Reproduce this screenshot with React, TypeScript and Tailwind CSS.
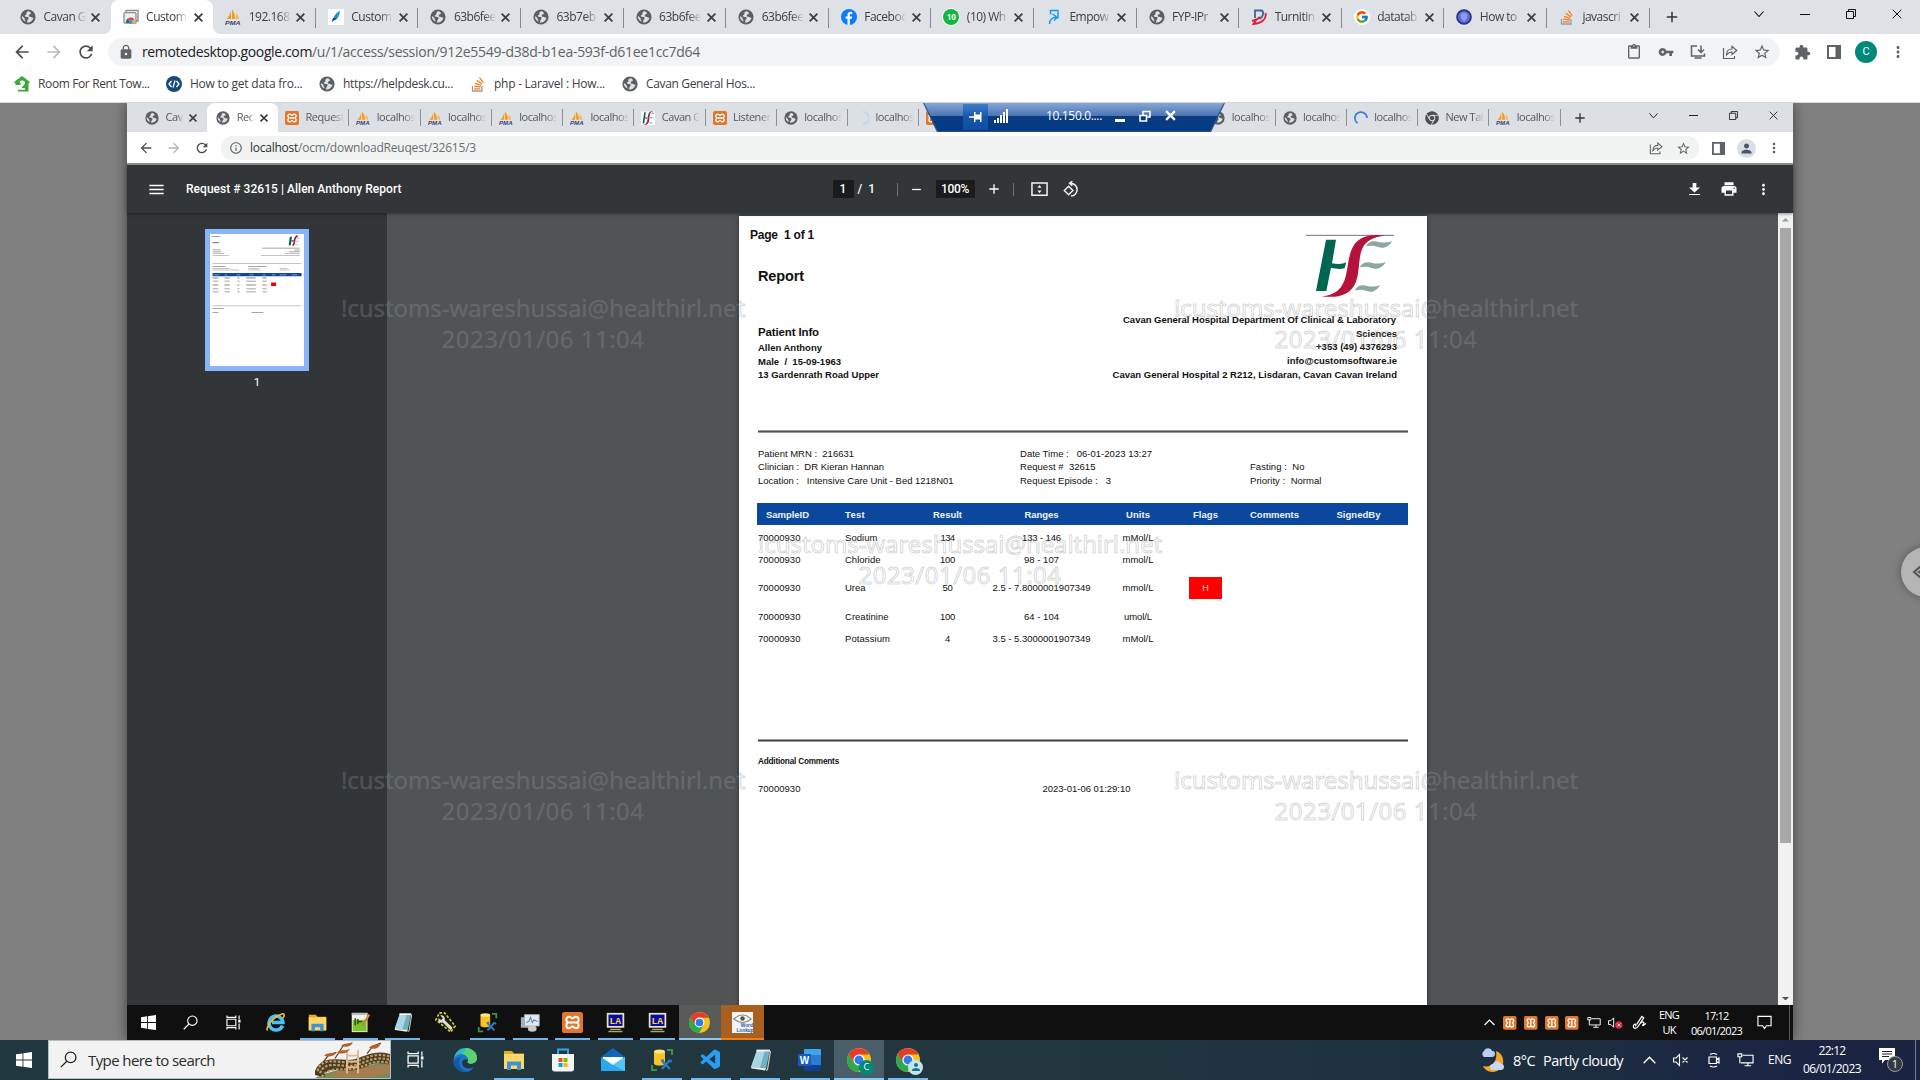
import React, { useLayoutEffect, useRef, useState } from "react";
import {
  MdArrowBack, MdArrowForward, MdRefresh, MdLock, MdStarBorder, MdExtension, MdMoreVert,
  MdContentPaste, MdVpnKey, MdPerson, MdMenu, MdRemove, MdAdd, MdPrint, MdInfoOutline,
} from "react-icons/md";
import { FcGoogle } from "react-icons/fc";
import { FaChrome } from "react-icons/fa";
import { VscVscode } from "react-icons/vsc";

const UI = "font-['Open_Sans','Noto_Sans',sans-serif]";

/** One line of text whose letter spacing is tuned to fill `w` pixels. */
function Fit({ w, children, className = "" }: { w: number; children: string; className?: string }) {
  const ref = useRef<HTMLSpanElement>(null);
  const [ls, setLs] = useState(0);
  useLayoutEffect(() => {
    const el = ref.current;
    if (!el) return;
    setLs((w - el.getBoundingClientRect().width) / children.length);
  }, [w, children]);
  return (
    <span ref={ref} className={"inline-block shrink-0 whitespace-pre " + className} style={{ letterSpacing: ls }}>
      {children}
    </span>
  );
}

/* ---------- favicons ---------- */
const Globe = ({ className = "size-4" }) => (
  <svg viewBox="0 0 16 16" className={className}>
    <circle cx="8" cy="8" r="7.6" fill="#5b5f63" />
    <path d="M9 2.3c-2 .2-3 1.4-2.6 2.6.3 1-1.6.8-1.6 2 0 1 1.8.7 3 1.1 1.3.4.8 1.9.1 2.6-.7.7-.5 2-1.2 2.9 3.8.3 6.3-2.2 6.7-4.8-1.2.3-2-.9-3.2-.9-1.3 0-1.8-.9-1.3-1.8.4-.7 1.7-.4 2-1.4.1-.9-.7-1.6-1.9-2.3Z" fill="#dee1e6" />
    <path d="M1.9 7c1.3 1 2.7 1.500 2.8 2.900.1 1 .9 1.300 1 2.600C3.300 11.700 1.700 9.500 1.900 7Z" fill="#dee1e6" />
  </svg>
);
const Pma = ({ className = "size-4" }) => (
  <svg viewBox="0 0 16 16" className={className}>
    <path d="M6 1v9H1.500C4 7.500 5.500 5 6 1ZM7 .5c2.500 3 3.300 6 3.300 9.500H7Z" fill="#f79b1e" />
    <path d="M11 4c1.800 1.600 2.700 3.600 3 6h-3Z" fill="#fbb657" />
    <text x="0" y="15.800" fontSize="6.200" fontWeight="bold" fontStyle="italic" fill="#3c3f73" fontFamily="Liberation Sans" textLength="15.500" lengthAdjust="spacingAndGlyphs">PMA</text>
  </svg>
);
const Xampp = ({ className = "size-4" }) => (
  <svg viewBox="0 0 16 16" className={className}>
    <rect width="16" height="16" rx="2" fill="#e2762d" />
    <path d="M5.600 3.600C3.600 3.600 3.300 5 3.300 6c0 1 .800 1.700 1.400 2-.900.300-1.400 1-1.400 2.100 0 1.300.700 2.300 2 2.300 1.700 0 1.600-1.400 2.700-1.400s1 1.400 2.700 1.400c1.300 0 2-1 2-2.300 0-1.100-.5-1.800-1.400-2.100.600-.3 1.400-1 1.400-2 0-1-.3-2.400-2.300-2.400-1.300 0-1.300 1.300-2.400 1.300S6.900 3.600 5.600 3.600ZM5.500 8h5" fill="none" stroke="#fff" strokeWidth="1.500" />
  </svg>
);
const Remote = () => (
  <svg viewBox="0 0 16 16" className="size-4">
    <path d="M3 3V1.500h12V12h-2" fill="none" stroke="#8b8f93" strokeWidth="1.400" />
    <rect x="1" y="3.700" width="12" height="10.500" rx="1" fill="#eee" stroke="#8b8f93" strokeWidth="1.300" />
    <path d="M3 14a4.200 4.200 0 0 1 2-4.500L7.500 14Z" fill="#188038" />
    <path d="M4.500 9.800a4.300 4.300 0 0 1 7.200 1.700H7Z" fill="#ea4335" />
    <path d="M9 11.500h3V14H8Z" fill="#fbbc04" />
    <circle cx="7.700" cy="12.800" r="1.900" fill="#4285f4" />
  </svg>
);
const Feather = () => (
  <svg viewBox="0 0 16 16" className="size-4">
    <rect width="16" height="16" fill="#fff" />
    <path d="M12 2c-3 1-5.500 4-6.500 7l-2 3.500L7 11c3-1 4.500-5 5-9Z" fill="#1593d6" />
    <path d="M5 9h4l-5 4Z" fill="#0d4b80" />
  </svg>
);
const Facebook = () => (
  <svg viewBox="0 0 16 16" className="size-4">
    <circle cx="8" cy="8" r="8" fill="#0a7cff" />
    <path d="M8.800 16V9.800h2l.4-2.300H8.800V6.200c0-.8.400-1.300 1.300-1.300h1.200V2.900C9 2.400 6.500 2.700 6.500 5.700v1.800H4.600v2.300h1.900V16Z" fill="#fff" />
  </svg>
);
const Whats = () => (
  <span className="flex size-4 items-center justify-center rounded-full bg-[#10b83f] text-[8px] font-bold text-white ring-1 ring-white">10</span>
);
const Empow = () => (
  <svg viewBox="0 0 16 16" className="size-4" fill="none" stroke="#1e9bf0" strokeWidth="1.500">
    <path d="M4.500 5.500V1.500h7.500V9.500M3.500 15c0-4 1.500-6.500 7.500-7M6.500 5 11.300 8.300 8 11.500" />
  </svg>
);
const Turnitin = () => (
  <svg viewBox="0 0 16 16" className="size-4" fill="none" strokeWidth="1.900">
    <path d="M4 9V1.500h7c2 2 1.500 6-2.500 8.500" stroke="#3d6a9e" />
    <path d="M14.500 4c1.500 6-4 10.500-12 11l3-4.500M1 12c3-1 5-1 8-4" stroke="#e0233c" />
  </svg>
);
const Orb = () => (
  <svg viewBox="0 0 16 16" className="size-4">
    <circle cx="8" cy="8" r="7.800" fill="#2b3480" /><circle cx="8" cy="8" r="6" fill="#5b6bd8" />
    <path d="M4.500 5 8 3.500 11.500 5c0 4-1 6-3.500 7.500C5.500 11 4.500 9 4.500 5Z" fill="#8d9af0" />
  </svg>
);
const So = () => (
  <svg viewBox="0 0 16 16" className="size-4" fill="none" strokeWidth="1.300">
    <path d="M2.500 10v5h9.500v-5" stroke="#9a9da0" />
    <path d="M4 12.800h6.500M4.200 10.200l6.400.8M5 7.300l6.200 2M6.800 4.300l5.300 3.600M9.500 1.700l3.800 5" stroke="#f48024" />
  </svg>
);
const Spinner = ({ faint = false }) => (
  <svg viewBox="0 0 16 16" className="size-3.5" fill="none" stroke={faint ? "#c3d3f0" : "#3f7ee0"} strokeWidth="2">
    {faint ? <path d="M9 1a7 7 0 0 1 0 14" /> : <path d="M4 14A7 7 0 1 1 15 8" />}
  </svg>
);
const HseMark = ({ className = "" }) => (
  <svg viewBox="78 72 264 192" className={className} preserveAspectRatio="none">
    <path d="M78 76h264" stroke="#555" strokeWidth="2.500" />
    <path d="M138 89h30l-12 71c14 2 30 4 43-3l-5 17c-13 5-28 2-41-1l-14 70h-31Z" fill="#00664f" />
    <path d="M316 77C280 72 240 76 220 108c-15 27-15 57-22 87-8 40-33 62-73 64 48 6 88-4 103-44 12-35 6-65 18-97 10-26 35-38 70-41Z" fill="#b5123c" />
    <g fill="#8aa99b">
      <path d="M258 109c10-17 26-17 38-13 14 3 26 2 40-3-9 18-25 24-42 18-13-5-24-4-36-2Z" />
      <path d="M239 172c10-17 26-17 38-13 14 3 26 2 40-3-9 18-25 24-42 18-13-5-24-4-36-2Z" />
      <path d="M224 241c10-17 26-17 38-13 14 3 26 2 38-3-9 18-25 24-40 18-13-5-24-4-36-2Z" />
    </g>
  </svg>
);
const HseFav = () => <span className="flex size-3.5 items-center justify-center bg-white"><HseMark className="h-3.5 w-3.5" /></span>;
const ChromeLogo = ({ className = "size-5" }) => (
  <svg viewBox="0 0 24 24" className={className}>
    <circle cx="12" cy="12" r="12" fill="#fbc116" />
    <path d="M1.600 6A12 12 0 0 0 11.500 24L17 14.500 12 12 7 15Z" fill="#2da94f" />
    <path d="M1.600 6A12 12 0 0 1 22.400 6.500H12L7 15Z" fill="#e33b2e" />
    <circle cx="12" cy="12" r="5.600" fill="#fff" /><circle cx="12" cy="12" r="4.400" fill="#2f7de9" />
  </svg>
);
const Share = ({ className = "size-4" }) => (
  <svg viewBox="0 0 16 16" className={className} fill="none" stroke="#5f6368" strokeWidth="1.200">
    <path d="M1.500 4v10.500h11V12M4.500 11c0-4 2.500-6 5.500-6V2.300L14.800 6.500 10 10.500V8C7.500 8 6 9 4.500 11Z" />
  </svg>
);
const SidePanel = ({ className = "size-3.5" }) => (
  <svg viewBox="0 0 14 14" className={className}><path d="M1 1h12v12H1Z" fill="none" stroke="#5f6368" strokeWidth="2" /><path d="M8.500 1H13v12H8.500Z" fill="#5f6368" /></svg>
);
const Restore = ({ className = "size-2.5" }) => (
  <svg viewBox="0 0 10 10" className={className} fill="none" stroke="currentColor"><path d="M.5 2.500h7v7h-7ZM2.500 2.500v-2h7v7h-2" /></svg>
);
const Chev = ({ up = false, className = "w-2.5" }) => (
  <svg viewBox="0 0 10 6" className={className} fill="none" stroke="currentColor" strokeWidth="1.100"><path d={up ? "M.5 5.500 5 1l4.500 4.500" : "M.5.5 5 5.500 9.500.5"} /></svg>
);
const Cross = ({ className = "size-2.5", sw = 1 }) => (
  <svg viewBox="0 0 10 10" className={"shrink-0 " + className} fill="none" stroke="currentColor" strokeWidth={sw}><path d="m.7.7 8.600 8.600m0-8.600L.7 9.300" /></svg>
);

/* ---------- outer browser ---------- */
const outerTabs: [React.ReactNode, string][] = [
  [<Globe />, "Cavan G"], [<Remote />, "Custom"], [<Pma />, "192.168"], [<Feather />, "Custom"],
  [<Globe />, "63b6fee"], [<Globe />, "63b7eb"], [<Globe />, "63b6fee"], [<Globe />, "63b6fee"],
  [<Facebook />, "Faceboo"], [<Whats />, "(10) Wh"], [<Empow />, "Empow"], [<Globe />, "FYP-IPr"],
  [<Turnitin />, "Turnitin"], [<span className="flex size-4 items-center justify-center rounded-full bg-white"><FcGoogle className="size-3.5" /></span>, "datatab"],
  [<Orb />, "How to"], [<So />, "javascri"],
];

function OuterTabs() {
  return (
    <div className="flex h-[34px] bg-[#dee1e6] pl-[8px]">
      {outerTabs.map(([icon, t], i) => (
        <div
          key={i}
          className={
            "relative flex h-full w-[102.6px] shrink-0 items-center pl-[12px] " +
            (i === 1 ? "rounded-t-lg bg-white before:absolute before:bottom-0 before:-left-2 before:size-2 before:bg-[radial-gradient(circle_at_0_0,transparent_8px,white_8px)] after:absolute after:bottom-0 after:-right-2 after:size-2 after:bg-[radial-gradient(circle_at_100%_0,transparent_8px,white_8px)]" : "")
          }
        >
          {icon}
          <span className="ml-[7.500px] w-[42px] overflow-hidden text-[12px] tracking-[-0.500px] whitespace-nowrap text-[#3c4043] [mask-image:linear-gradient(to_right,black_70%,transparent)]">{t}</span>
          <Cross sw={2} className="ml-[5.500px] size-[9px] text-[#3c4043]" />
          {i > 1 && <span className="absolute top-2 right-0 h-5 w-px bg-[#85888c]" />}
        </div>
      ))}
      <div className="flex w-[44px] items-center justify-center"><MdAdd className="size-[18px] text-[#333]" /></div>
      <div className="flex h-[28px] flex-1 items-center justify-end text-[#111]">
        <span className="flex w-[46px] justify-center"><Chev className="w-[10px]" /></span>
        <span className="flex w-[46px] justify-center"><i className="h-px w-[10px] bg-[#111]" /></span>
        <span className="flex w-[46px] justify-center"><Restore /></span>
        <span className="flex w-[46px] justify-center"><Cross /></span>
      </div>
    </div>
  );
}

function OuterToolbar() {
  return (
    <div className="flex h-[36px] items-center bg-white text-[#5f6368]">
      <div className="flex w-[108px] items-center pl-[12px]">
        <MdArrowBack className="size-5 text-[#4a4d51]" />
        <MdArrowForward className="ml-3 size-5 text-[#b9bbbe]" />
        <MdRefresh className="ml-3 size-5 text-[#4a4d51]" />
      </div>
      <div className="flex h-[28px] w-[1672px] items-center rounded-full bg-[#f1f3f4] pl-[10px]">
        <MdLock className="size-4" />
        <div className="ml-[8px] flex pb-px text-[14px]">
          <Fit w={170} className="text-[#202124]">remotedesktop.google.com</Fit>
          <Fit w={388}>/u/1/access/session/912e5549-d38d-b1ea-593f-d61ee1cc7d64</Fit>
        </div>
        <div className="ml-auto flex items-center pr-[2px]">
          <span className="flex w-8 justify-center"><MdContentPaste className="size-4" /></span>
          <span className="flex w-8 justify-center"><MdVpnKey className="size-4" /></span>
          <span className="flex w-8 justify-center">
            <svg viewBox="0 0 16 16" className="size-4" fill="none" stroke="#5f6368" strokeWidth="1.500"><path d="M7 2H1.500v10h13V9.500M4.500 14h7M11 1.500V8M8 5.500l3 3 3-3" /></svg>
          </span>
          <span className="flex w-8 justify-center"><Share /></span>
          <span className="flex w-8 justify-center"><MdStarBorder className="size-[18px]" /></span>
        </div>
      </div>
      <div className="ml-[6px] flex items-center">
        <span className="flex w-8 justify-center"><MdExtension className="size-[17px]" /></span>
        <span className="flex w-8 justify-center"><SidePanel /></span>
        <span className="flex w-8 justify-center"><i className="flex size-[22px] items-center justify-center rounded-full bg-[#00897b] font-['Roboto'] text-[11px] text-white not-italic">C</i></span>
        <span className="flex w-8 justify-center"><MdMoreVert className="size-[18px]" /></span>
      </div>
    </div>
  );
}

const Room = () => (
  <svg viewBox="0 0 16 16" className="size-4"><path d="M8 0 16 6l-1.500 1.500V15.500H4V14l5-5.500c.5-1-1-2-2-1L6 9H1.500V7.500L0 6Z" fill="#3aaa35" /><path d="M5.500 6c2-2.500 6-1.500 5.500 1.200-.3 1.800-3 3.300-3.500 4.800H11v1.800H4.500C4.700 11 8 9 8.500 7.300c.2-1-1.500-1-1.800.3Z" fill="#fff" /></svg>
);
const Code = () => (
  <svg viewBox="0 0 16 16" className="size-4"><circle cx="8" cy="8" r="8" fill="#174a7c" /><path d="M5.500 5 3 8l2.500 3M10.500 5 13 8l-2.500 3M9 4.500l-2 7" fill="none" stroke="#fff" strokeWidth="1.300" /></svg>
);

function Bookmarks() {
  const items: [React.ReactNode, string, number, string][] = [
    [<Room />, "Room For Rent Tow...", 111.5, "w-[152px]"],
    [<Code />, "How to get data fro...", 112.5, "w-[153px]"],
    [<Globe />, "https://helpdesk.cu...", 110, "w-[151px]"],
    [<So />, "php - Laravel : How...", 111, "w-[152px]"],
    [<Globe />, "Cavan General Hos...", 109, "w-[150px]"],
  ];
  return (
    <div className="flex h-[33px] items-center border-b border-[#d4d6d8] bg-white pb-[4px] pl-[14px] text-[12px] text-[#3c4043]">
      {items.map(([icon, t, w, c]) => (
        <div key={t} className={"flex shrink-0 items-center gap-2 " + c}>{icon}<Fit w={w}>{t}</Fit></div>
      ))}
    </div>
  );
}

/* ---------- remote browser ---------- */
const s = "size-3.5";
const innerTabs: [React.ReactNode, string][] = [
  [<Globe className={s} />, "Cav"], [<Globe className={s} />, "Req"], [<Xampp className={s} />, "Request"],
  [<Pma className={s} />, "localhos"], [<Pma className={s} />, "localhos"], [<Pma className={s} />, "localhos"], [<Pma className={s} />, "localhos"],
  [<HseFav />, "Cavan G"], [<Xampp className={s} />, "Listener"], [<Globe className={s} />, "localhos"], [<Spinner faint />, "localhos"],
  [<Xampp className={s} />, ""], [null, ""], [null, ""], [null, ""],
  [<Globe className={s} />, "localhos"], [<Globe className={s} />, "localhos"], [<Spinner />, "localhos"],
  [<FaChrome className="size-3.5 text-[#4b4e52]" />, "New Tab"], [<Pma className={s} />, "localhos"],
];

function RdpBar() {
  return (
    <div className="absolute top-0 left-[796px] h-[29px] w-[302px] bg-[#2b4f86] [clip-path:polygon(0_0,100%_0,95.4%_100%,4.6%_100%)]">
      <div className="flex h-[28px] items-center bg-[linear-gradient(#86a7d6_0%,#4b76b6_45%,#0b3c82_48%,#003a86_100%)] pb-[3px] text-white [clip-path:polygon(0.4%_0,99.6%_0,95%_100%,5%_100%)]">
        <span className="-mb-[3px] ml-[40px] flex h-[26px] w-[25px] items-center justify-center bg-[linear-gradient(#3f7cc8,#1657ab_50%,#0f4ea0)]">
          <svg viewBox="0 0 14 12" className="w-[14px]" fill="#fff"><path d="M0 5.200h5v1.600H0ZM5 1h1.500v2.500H11V1h1.500v10H11V8.500H6.500V11H5Z" /></svg>
        </span>
        <svg viewBox="0 0 14 14" className="ml-[6px] w-[14px]" fill="#fff"><path d="M0 11h2v3H0ZM3 9h2v5H3ZM6 6h2v8H6ZM9 3h2v11H9ZM12 0h2v14h-2Z" /></svg>
        <Fit w={56} className="ml-[38px] pt-px text-[12px]">10.150.0....</Fit>
        <i className="mt-[10px] ml-[13px] h-[3px] w-[10px] bg-white" />
        <svg viewBox="0 0 12 12" className="ml-[14px] w-[12px]" fill="none" stroke="#fff" strokeWidth="1.600"><path d="M1 5.500h6.500V11H1ZM4 5V1.500h7V7H8" /></svg>
        <svg viewBox="0 0 10 10" className="ml-[14px] w-[11px]" stroke="#fff" strokeWidth="2"><path d="m1 1 8 8M9 1 1 9" /></svg>
      </div>
    </div>
  );
}

function InnerBrowser() {
  return (
    <>
      <div className="relative flex h-[29px] bg-[#dcdfe4] pl-[8.500px]">
        {innerTabs.map(([icon, t], i) => (
          <div
            key={i}
            className={"relative flex h-full w-[71.25px] shrink-0 items-center " + (i < 2 ? "pl-[9.500px] " : "pl-[7px] ") + (i === 1 ? "rounded-t-lg bg-white" : "")}
          >
            <span className="flex w-[15px]">{icon}</span>
            <span className={"ml-[5.500px] overflow-hidden text-[11px] tracking-[-0.450px] whitespace-nowrap text-[#55595e] [mask-image:linear-gradient(to_right,black_70%,transparent)] " + (i < 2 ? "w-[17px]" : "w-[38px]")}>{t}</span>
            {i < 2 && <Cross sw={2} className="ml-[6.500px] size-[8px] text-[#3c4043]" />}
            {i > 1 && <span className="absolute top-[6px] right-0 h-[17px] w-px bg-[#8e9195]" />}
          </div>
        ))}
        <div className="flex w-[38px] items-center justify-center"><MdAdd className="size-[16px] text-[#333]" /></div>
        <div className="flex h-[25px] flex-1 items-center justify-end text-[#222]">
          <span className="flex w-[40px] justify-center"><Chev className="w-[9px]" /></span>
          <span className="flex w-[40px] justify-center"><i className="h-px w-[9px] bg-[#222]" /></span>
          <span className="flex w-[40px] justify-center"><Restore className="size-[9px]" /></span>
          <span className="flex w-[40px] justify-center"><Cross className="size-[9px]" /></span>
        </div>
        <RdpBar />
      </div>
      <div className="flex h-[33px] items-center border-b-2 border-[#8c9092] bg-white pt-px text-[#5f6368]">
        <div className="flex w-[94px] items-center pl-[11px]">
          <MdArrowBack className="size-4 text-[#4a4d51]" />
          <MdArrowForward className="ml-3 size-4 text-[#b0b2b5]" />
          <MdRefresh className="ml-3 size-4 text-[#4a4d51]" />
        </div>
        <div className="flex h-[24px] w-[1478px] items-center rounded-full bg-[#f0f3f2] pl-[8px]">
          <MdInfoOutline className="size-[14px]" />
          <div className="ml-[7px] flex text-[12px]">
            <Fit w={48} className="text-[#2c2f33]">localhost</Fit>
            <Fit w={178} className="text-[#6a6e72]">/ocm/downloadReuqest/32615/3</Fit>
          </div>
          <Share className="mr-[13px] ml-auto size-[14px]" />
          <MdStarBorder className="mr-[8px] size-[15px]" />
        </div>
        <SidePanel className="ml-[13px] size-[13px]" />
        <span className="ml-[12px] flex size-[19px] items-center justify-center rounded-full bg-[#dadfe6]"><MdPerson className="size-[15px] text-[#4a5568]" /></span>
        <MdMoreVert className="ml-[10px] size-[16px]" />
      </div>
    </>
  );
}

function PdfToolbar() {
  return (
    <div className="relative z-10 flex h-[48px] items-center bg-[#323639] font-['Roboto',sans-serif] text-white shadow-[0_1px_3px_rgba(0,0,0,0.4)]">
      <MdMenu className="ml-[20px] size-[19px]" />
      <Fit w={215.5} className="ml-[20px] text-[12px] font-medium">Request # 32615 | Allen Anthony Report</Fit>
      <div className="ml-[431px] flex items-center text-[12px] font-medium">
        <span className="flex h-[18px] w-[21px] items-center justify-center bg-[#191b1c]">1</span>
        <span className="ml-[4px] w-[39px] whitespace-pre">/  1</span>
        <i className="h-[13px] w-px bg-[#6a6e70]" />
        <MdRemove className="ml-[11px] size-[15px]" />
        <span className="ml-[12px] flex h-[18px] w-[39px] items-center justify-center bg-[#191b1c]"><Fit w={28}>100%</Fit></span>
        <MdAdd className="ml-[11px] size-[16px]" />
        <i className="ml-[11px] h-[13px] w-px bg-[#6a6e70]" />
        <svg viewBox="0 0 18 15" className="ml-[17px] w-[17px]" fill="none" stroke="#f1f1f1" strokeWidth="1.600"><path d="M1 1h16v13H1Z" /><path d="M9 3.200 6.800 6h4.400ZM9 11.800 6.800 9h4.400Z" fill="#f1f1f1" stroke="none" /></svg>
        <svg viewBox="0 0 18 18" className="ml-[14px] w-[17px]" fill="none" stroke="#f1f1f1" strokeWidth="1.600"><path d="m7 5.500 4.500 4.500L7 14.500 2.500 10ZM9 2.500c4 0 7 2.800 7 6.700 0 3.800-3 6.600-6.500 6.800M11 0 8 2.500 11 5" /></svg>
      </div>
      <svg viewBox="0 0 12 14" className="ml-auto w-[11px]" fill="#fff"><path d="M4 0h4v5h4L6 10.500 0 5h4ZM0 12h12v2H0Z" /></svg>
      <MdPrint className="ml-[20px] size-[18px]" />
      <MdMoreVert className="mr-[21px] ml-[17px] size-[17px]" />
    </div>
  );
}

function Sidebar() {
  return (
    <div className="flex w-[260px] shrink-0 flex-col bg-[#323639] pl-[78px] pt-[16px]">
      <div className="h-[142px] w-[104px] border-[5px] border-[#8ab4f8] bg-white">
        <svg viewBox="0 0 688 966" className="size-full" preserveAspectRatio="none">
          <g fill="#888">
            <path d="M11 14h64v6H11ZM19 58h46v9H19Z" />
            <path d="M19 114h60v5H19ZM19 128h63v5H19ZM19 142h82v5H19ZM19 155h120v5H19Z" />
            <path d="M384 101h273v5H384ZM617 115h40v5H617ZM577 128h80v5H577ZM548 142h109v5H548ZM374 155h284v5H374Z" />
            <path d="M19 234h95v5H19ZM19 248h125v5H19ZM19 261h195v5H19ZM281 234h132v5H281ZM281 248h76v5H281ZM281 261h91v5H281ZM511 248h54v5H511ZM511 261h71v5H511Z" />
            {[319, 342, 370, 399, 420].map((y) => (
              <path key={y} d={`M19 ${y}h43v6h-43ZM106 ${y}h38v6h-38ZM200 ${y}h16v6h-16ZM265 ${y}h70v6h-70ZM383 ${y}h31v6h-31Z`} />
            ))}
            <path d="M19 543h81v5H19ZM19 570h43v6H19ZM303 570h88v6H303Z" />
          </g>
          <path d="M19 212h650v7H19ZM19 522h650v7H19Z" fill="#c4c4c4" />
          <path d="M19 286h651v24H19Z" fill="#0b489d" />
          <path d="M27 296h42v5H27ZM106 296h20v5h-20ZM194 296h28v5h-28ZM286 296h33v5h-33ZM387 296h23v5h-23ZM454 296h25v5h-25ZM511 296h49v5h-49ZM597 296h43v5h-43Z" fill="#8fb0dd" />
          <path d="M447 355h36v26h-36Z" fill="#e00" />
          <path d="M584 20h16l-8 62h-16ZM598 46h14v8h-14Z" fill="#00664f" />
          <path d="M642 16c-36 0-14 60-38 68" fill="none" stroke="#b5123c" strokeWidth="12" />
          <path d="M632 28h22v5H632ZM628 50h20v5h-20ZM624 76h20v5h-20Z" fill="#8aa99b" />
        </svg>
      </div>
      <span className="mt-[3px] w-[104px] text-center font-['Roboto',sans-serif] text-[11.500px] text-white">1</span>
    </div>
  );
}

const rows = [
  ["Sodium", "134", 14, "133 - 146", 39, "mMol/L", 31],
  ["Chloride", "100", 15, "98 - 107", 35, "mmol/L", 31],
  ["Urea", "50", 10, "2.5 - 7.8000001907349", 98, "mmol/L", 31],
  ["Creatinine", "100", 15, "64 - 104", 35, "umol/L", 28],
  ["Potassium", "4", 5, "3.5 - 5.3000001907349", 98, "mMol/L", 31],
] as const;
const testW = [32.5, 35.5, 20.5, 43.5, 45];
const cols = "grid grid-cols-[87px_68px_69px_119px_74px_61px_77px_91px] items-center";

function Report() {
  return (
    <div className="flex w-[688px] shrink-0 flex-col bg-white px-[19px] font-['Liberation_Sans',Arial,sans-serif] text-[9.500px] text-[#111] shadow-[0_0_4px_rgba(0,0,0,0.5)]">
      <div className="flex h-[214px] justify-between font-bold">
        <div className="flex flex-col items-start pt-[11px]">
          <div className="-ml-2 flex h-[16px] items-center text-[12px]"><Fit w={64}>Page  1 of 1</Fit></div>
          <div className="mt-[24px] flex h-[20px] items-center text-[14.500px]"><Fit w={46}>Report</Fit></div>
          <div className="mt-[38px] flex h-[15px] items-center text-[11.500px]"><Fit w={61}>Patient Info</Fit></div>
          <div className="mt-px flex flex-col items-start leading-[13.500px]">
            <Fit w={64}>Allen Anthony</Fit>
            <Fit w={83}>Male  /  15-09-1963</Fit>
            <Fit w={121}>13 Gardenrath Road Upper</Fit>
          </div>
        </div>
        <div className="flex flex-col items-end pt-[18px] pr-[11px]">
          <HseMark className="mr-[3px] h-[64px] w-[88px]" />
          <div className="mt-[15px] flex flex-col items-end leading-[13.700px]">
            <Fit w={273} className="mr-[1px]">Cavan General Hospital Department Of Clinical &amp; Laboratory</Fit>
            <Fit w={41}>Sciences</Fit>
            <Fit w={81}>+353 (49) 4376293</Fit>
            <Fit w={110}>info@customsoftware.ie</Fit>
            <Fit w={284.5}>Cavan General Hospital 2 R212, Lisdaran, Cavan Cavan Ireland</Fit>
          </div>
        </div>
      </div>
      <div className="h-[3px] shrink-0 border-y border-t-[#9a9a9a] border-b-[#9a9a9a] bg-[#555]" />
      <div className="grid h-[70px] grid-cols-[262px_230px_1fr] pt-[14px] leading-[13.400px]">
        <div className="flex flex-col items-start">
          <Fit w={96}>Patient MRN :  216631</Fit>
          <Fit w={126}>Clinician :  DR Kieran Hannan</Fit>
          <Fit w={195.5}>Location :   Intensive Care Unit - Bed 1218N01</Fit>
        </div>
        <div className="flex flex-col items-start">
          <Fit w={132}>Date Time :   06-01-2023 13:27</Fit>
          <Fit w={75.5}>Request #  32615</Fit>
          <Fit w={91}>Request Episode :   3</Fit>
        </div>
        <div className="flex flex-col items-start pt-[13.400px]">
          <Fit w={54.5}>Fasting :  No</Fit>
          <Fit w={71.5}>Priority :  Normal</Fit>
        </div>
      </div>
      <div className={cols + " -ml-px h-[22px] w-[651px] justify-items-center bg-[#0b489d] pt-[2px] pl-px font-bold text-[#eef3fa]"}>
        <Fit w={43} className="mr-[28px]">SampleID</Fit>
        <Fit w={20} className="justify-self-start">Test</Fit>
        <Fit w={29}>Result</Fit>
        <Fit w={34}>Ranges</Fit>
        <Fit w={24}>Units</Fit>
        <Fit w={25}>Flags</Fit>
        <Fit w={49}>Comments</Fit>
        <Fit w={44}>SignedBy</Fit>
      </div>
      <div className="h-[2px]" />
      {rows.map(([test, r, rw, g, gw, u, uw], i) => (
        <div key={test} className={cols + " justify-items-center " + (i === 2 ? "h-[35px]" : "h-[22px]")}>
          <Fit w={42.5} className="justify-self-start">70000930</Fit>
          <Fit w={testW[i]} className="justify-self-start">{test}</Fit>
          <Fit w={rw}>{r}</Fit>
          <Fit w={gw}>{g}</Fit>
          <Fit w={uw}>{u}</Fit>
          {i === 2 && <span className="mb-[2px] flex h-[22px] w-[33px] items-center justify-center bg-[#f00] pt-[2px] text-[9px] text-[#ffd9d9]">H</span>}
        </div>
      ))}
      <div className="mt-[89px] h-[3px] shrink-0 border-y border-t-[#9a9a9a] border-b-[#9a9a9a] bg-[#444]" />
      <div className="mt-[14px] flex h-[12px] items-center text-[8.200px] font-bold"><Fit w={81}>Additional Comments</Fit></div>
      <div className="mt-[15px] flex h-[12px] items-center">
        <Fit w={42.5}>70000930</Fit>
        <Fit w={88} className="ml-[242px]">2023-01-06 01:29:10</Fit>
      </div>
    </div>
  );
}

function Watermark({ className }: { className: string }) {
  return (
    <div className={"pointer-events-none absolute flex w-[406px] flex-col items-center font-['Noto_Sans','Open_Sans',sans-serif] text-[24px] leading-[31px] text-white/15 [-webkit-text-stroke:1px_rgba(100,102,105,0.27)] " + className}>
      <Fit w={404}>!customs-wareshussai@healthirl.net</Fit>
      <Fit w={203}>2023/01/06 11:04</Fit>
    </div>
  );
}

/* ---------- taskbar icons ---------- */
const WinLogo = ({ className = "" }) => (
  <svg viewBox="0 0 16 16" className={className} fill="#fff"><path d="M0 2.300 6.500 1.400V7.500H0ZM7.400 1.300 16 0v7.500H7.400ZM0 8.500h6.500v6.200L0 13.700ZM7.400 8.500H16V16l-8.600-1.200Z" /></svg>
);
const Mag = ({ className = "", stroke = "#fff" }) => (
  <svg viewBox="0 0 16 16" className={className} fill="none" stroke={stroke} strokeWidth="1.200"><circle cx="10" cy="6" r="5" /><path d="M6.400 9.600.8 15.200" /></svg>
);
const TaskView = ({ className = "" }) => (
  <svg viewBox="0 0 16 16" className={className} fill="none" stroke="#fff" strokeWidth="1.200"><path d="M1 4.500h9.500v7H1ZM1 .5v2h9.500v-2M1 15.500v-2h9.500v2M14 .5v4M14 9v6.500" /><path d="M13 5h2.500v3H13Z" fill="#fff" stroke="none" /></svg>
);
const Folder = () => (
  <svg viewBox="0 0 24 24" className="size-full"><path d="M2 3h8l2 2.500h10V21H2Z" fill="#e8a91c" /><path d="M2 6h20v15H2Z" fill="#ffd766" /><path d="M5 22v-8.500h14V22h-4v-4.500H9V22Z" fill="#3f94d6" /></svg>
);
const Notepad = () => (
  <svg viewBox="0 0 24 24" className="size-full"><path d="M9 2h13l-4 19-15-2Z" fill="#6fb0c4" /><path d="M9 2h8l-5 18-9-1Z" fill="#a9d6e2" /><path d="M8.500 2.500h13.500" stroke="#f5f5f5" strokeWidth="1.800" /><path d="m3 19 15 1.500-1 2L3.500 20.500Z" fill="#efefef" /><path d="m22.500 3-3 18.500-1.500 1" stroke="#d9cdb5" strokeWidth="1.200" fill="none" /></svg>
);
const Ssms = () => (
  <svg viewBox="0 0 24 24" className="size-full"><path d="M4 3h11v13c-2 2-9 2-11 0Z" fill="#f7c325" /><ellipse cx="9.500" cy="3.500" rx="5.500" ry="2" fill="#ffe58a" /><path d="M17 2h5v5M2 17v5h5" fill="none" stroke="#3f8f45" strokeWidth="2" /><path d="m12 13 8 8M20 12l-8 9M11 13l3-1M20 12l1.500 2" stroke="#2d7bc0" strokeWidth="2.200" /></svg>
);
const Edge = () => (
  <svg viewBox="0 0 24 24" className="size-full">
    <path d="M.8 11C1.500 4.500 6.500 0 12.500 0 19 0 24 4.500 24 9.800c0 4-3 5.900-6 5.900-2.400 0-3.800-.9-3.300-1.900C16 11 13 6.500 8.500 6.500 5 6.500 2 8.500.8 11Z" fill="#2fb9c4" />
    <path d="M12.500 0C19 0 24 4.500 24 9.800c0 4-3 5.900-6 5.900-2.400 0-3.800-.9-3.300-1.900C16 11 14.500 6.500 8.500 6 12 4 13 2 12.500 0Z" fill="#5bd075" />
    <path d="M.5 13C.5 8.500 4.500 6 8.500 6.500 12 7 14.500 9 14.800 12.500c-1-2-5-2-5.600 1.500C8.500 19 14 22.500 20.500 19.500 18.500 22.500 15.500 24 12.300 24 6 24 .5 19 .5 13Z" fill="#1b74cf" />
    <path d="M8.500 9C6 11 5.500 15 7 18c1.500 3 4.500 5.500 8 5.500-7 1.500-14-3-14.500-10C3.500 10 6 9 8.500 9Z" fill="#1558a8" />
  </svg>
);
const Ie = () => (
  <svg viewBox="0 0 24 24" className="size-full" fill="none"><path d="M20 15.500A8 8 0 1 1 20.500 12H8" stroke="#4cc2f1" strokeWidth="4" /><path d="M3 21C0 19 8 6 20 2c3-.5 2 3 .5 5" stroke="#f5c324" strokeWidth="1.800" /></svg>
);
const Npp = () => (
  <svg viewBox="0 0 24 24" className="size-full"><path d="M2 1h18v22H2Z" fill="#f2f2e8" /><path d="M3 9h16v13H3Z" fill="#7ac52c" /><path d="M2 1h18v2.500H2Z" fill="#bbb" strokeDasharray="2 1" /><path d="M6 7v8M9 8v6M9 11h5" stroke="#24480f" strokeWidth="1.600" /><path d="m22 3-8 13" stroke="#c78a2a" strokeWidth="2.500" /></svg>
);
const Wrench = () => (
  <svg viewBox="0 0 24 24" className="size-full"><path d="M5 1h6l12 15-5 7L1 9Z" fill="#1c1c10" stroke="#d6d32a" strokeWidth="1.800" strokeDasharray="3 2" /><path d="M6 4c4-1 6 3 5 5l9 9-2 3-9-9c-3 1-6-1-5-5l3 2 2-2Z" fill="#ddd" /></svg>
);
const Perf = () => (
  <svg viewBox="0 0 24 24" className="size-full"><path d="M1 6h14v12H1Z" fill="#a9b0b5" /><path d="M5 3h17v13H5Z" fill="#e4e9ee" stroke="#9aa" /><path d="m7 12 3-1 2-5 2 6 2-3 4 2" fill="none" stroke="#4a88c7" strokeWidth="1.200" /><ellipse cx="14" cy="19" rx="5" ry="3.500" fill="#c6cacd" /></svg>
);
const La = () => (
  <svg viewBox="0 0 24 24" className="size-full"><path d="M2 1h20v17H2Z" fill="#e6e4b8" /><path d="M4 3h16v13H4Z" fill="#0a0aa8" /><path d="M6 19h12v1.500H6ZM4 21.500h16V23H4Z" fill="#a9a57a" /><text x="5" y="13.500" fontSize="11" fontWeight="bold" fill="#f3d631" fontFamily="Liberation Mono">LA</text></svg>
);
const Word = () => (
  <svg viewBox="0 0 24 24" className="size-full"><path d="M6 1h17v22H6Z" fill="#2b7cd3" /><path d="M6 1h17v6H6Z" fill="#41a5ee" /><path d="M6 17h17v6H6Z" fill="#103f91" /><rect y="6" width="13" height="12" rx="1" fill="#185abd" /><text x="1.800" y="15.500" fontSize="10" fontWeight="bold" fill="#fff" fontFamily="Liberation Sans">W</text></svg>
);
const Store = () => (
  <svg viewBox="0 0 24 24" className="size-full"><path d="M7 7V1.500h10V7" fill="none" stroke="#29a9ea" strokeWidth="2" /><path d="M1 6h22v15c0 1.500-1 2.500-2.500 2.500h-17C2 23.500 1 22.500 1 21Z" fill="#f4f4f4" /><path d="M7.500 10h4v4h-4Z" fill="#f25022" /><path d="M12.500 10h4v4h-4Z" fill="#7fba00" /><path d="M7.500 15h4v4h-4Z" fill="#00a4ef" /><path d="M12.500 15h4v4h-4Z" fill="#ffb900" /></svg>
);
const Mail = () => (
  <svg viewBox="0 0 24 24" className="size-full"><path d="M0 9 12 0l12 9v14H0Z" fill="#1066b8" /><path d="M2 9h20v8H2Z" fill="#fff" /><path d="m0 9 12 8 12-8v14H0Z" fill="#2ba7ee" /><path d="m24 9-12 8 12 6Z" fill="#54c4f7" /></svg>
);
const Lookup = () => (
  <svg viewBox="0 0 24 24" className="size-full"><path d="M0 0h24v24H0Z" fill="#f4f4f4" /><path d="M2 8q10-9 20 0-10 8-20 0Z" fill="none" stroke="#888" strokeWidth="1.200" /><circle cx="12" cy="7.500" r="2.600" fill="#555" /><text x="10" y="17" fontSize="5.500" fontWeight="bold" fill="#1a5aa8" fontFamily="Liberation Sans">Word</text><text x="5" y="22.500" fontSize="5.500" fontWeight="bold" fill="#1a5aa8" fontFamily="Liberation Sans">Lookup</text></svg>
);
const Net = ({ className = "" }) => (
  <svg viewBox="0 0 18 16" className={className} fill="none" stroke="#fff" strokeWidth="1.200"><path d="M6 3.500h11v8H4M8 14.500h7M11.500 11.500v3M1 2h4v3H1ZM3 5v7" /></svg>
);

function InnerTaskbar() {
  const apps: [React.ReactNode, string][] = [
    [<WinLogo className="size-[15px]" />, ""], [<Mag className="size-[15px]" />, ""], [<TaskView className="size-[15px]" />, ""],
    [<Ie />, ""], [<Folder />, "u"], [<Npp />, "u"], [<Notepad />, "u"], [<Wrench />, ""], [<Ssms />, "u"], [<Perf />, "u"],
    [<Xampp className="size-[21px]" />, "u"], [<La />, "u"], [<La />, "u"], [<ChromeLogo className="size-[21px]" />, "a"], [<Lookup />, "o"],
  ];
  return (
    <div className="flex h-[35px] shrink-0 bg-[#101010] text-white">
      {apps.map(([ic, k], i) => (
        <div key={i} className={"flex w-[42.45px] shrink-0 flex-col items-center " + (k === "a" ? "bg-[#585a58]" : k === "o" ? "bg-[#a85f1f]" : "")}>
          <div className="flex h-[33px] items-center justify-center pt-px"><span className="flex size-[21px] items-center justify-center">{ic}</span></div>
          <i className={"h-[2px] " + (k === "u" ? "w-[35px] bg-[#76b4e8]" : k === "a" ? "w-full bg-[#8cc4f2]" : k === "o" ? "w-full bg-[#f57c14]" : "w-0")} />
        </div>
      ))}
      <div className="ml-auto flex items-center text-[11px]">
        <Chev up className="mr-[8px] w-[11px]" />
        {[0, 1, 2, 3].map((i) => <Xampp key={i} className="mr-[7px] size-[13.700px] rotate-90" />)}
        <Net className="mr-[7px] ml-px w-[14px]" />
        <svg viewBox="0 0 16 14" className="mr-[9px] w-[15px]"><path d="M.5 5h2.500l3-3v10l-3-3H.5Z" fill="none" stroke="#fff" /><circle cx="11.500" cy="9.500" r="4" fill="#d8273c" /><path d="m10 8 3 3m0-3-3 3" stroke="#fff" /></svg>
        <svg viewBox="0 0 16 16" className="mr-[12px] w-[15px]" fill="none" stroke="#fff" strokeWidth="1.300"><path d="m5 10 5.500-8.500 2 1.500L7 11.500c-3 5-7 2-5-1 2-2 3 1 1.500 1.500M9 9c3-3 5-1 3 1s1 1 3-1" /></svg>
        <div className="mr-px flex w-[20px] flex-col items-center leading-[14.500px]"><Fit w={20}>ENG</Fit><Fit w={13}>UK</Fit></div>
        <div className="ml-[11px] flex w-[51px] flex-col items-center leading-[15px]"><Fit w={24}>17:12</Fit><Fit w={51}>06/01/2023</Fit></div>
        <svg viewBox="0 0 16 16" className="ml-[15px] w-[15px]" fill="none" stroke="#fff" strokeWidth="1.200"><path d="M1 1.500h14v10h-5L8 14.500 6 11.500H1Z" /></svg>
        <i className="mr-[3px] ml-[17px] h-[35px] w-px bg-[#555]" />
      </div>
    </div>
  );
}

function SearchArt() {
  return (
    <svg viewBox="0 0 75 38" className="h-[37px] w-[75px]" preserveAspectRatio="none" fill="none">
      <path d="M0 38c10-5 22-9 36-10 15-1 26-6 39-7v17Z" fill="#6f8f58" />
      <path d="M12 36c12-6 22-8 34-9 12 0 20-3 29-3v9c-20 5-40 6-63 3Z" fill="#b07a4c" opacity=".85" />
      <path d="M4 36C8 20 20 25 34 25 48 25 56 13 75 19" stroke="#4f3a24" strokeWidth="11" />
      <path d="M2.500 31C7 16 20 22 34 22 47 22 56 10 75 16M5 33C10 21 20 25.500 34 25.500 48 25.500 57 13.500 75 19.500M7 37c5-9 14-8 27-8 14 0 24-12 41-6" stroke="#b9a164" strokeWidth="2.200" strokeDasharray="2.600 1.600" />
      <path d="M32 9v24M43 9v24M32 15h11M32 21h11M32 27h11" stroke="#e2b98b" strokeWidth="2" />
      <path d="M8 22 14 14l7-2M20 18 28 5l9-3M52 13l6-8 8-3" stroke="#6a3a16" strokeWidth="1.200" />
      <path d="M9 15c4-4 8-1 13-4-3 5-8 6-13 4ZM22 12c4-4 8-1 13-4-3 5-8 6-13 4ZM26 5c4-4 8-1 12-4-2 5-7 6-12 4ZM54 7c3-4 8-2 12-5-2 6-7 7-12 5Z" fill="#b5622a" />
    </svg>
  );
}

function OuterTaskbar() {
  const apps: [React.ReactNode, string][] = [
    [<TaskView className="size-[17px]" />, ""], [<Edge />, ""], [<Folder />, "u"], [<Store />, ""], [<Mail />, ""], [<Ssms />, "u"],
    [<VscVscode className="size-full text-[#2a9df0]" />, "u"], [<Notepad />, "u"], [<Word />, "u"],
    [<span className="relative block size-full"><ChromeLogo className="size-full" /><i className="absolute -right-[3px] -bottom-[3px] flex size-[15px] items-center justify-center rounded-full bg-[#00897b] text-[9px] text-white not-italic">C</i></span>, "a"],
    [<span className="relative block size-full"><ChromeLogo className="size-full" /><i className="absolute -right-[3px] -bottom-[3px] flex size-[15px] items-center justify-center rounded-full bg-[#bfe6f0]"><MdPerson className="size-[12px] text-[#1d6f8c]" /></i></span>, "u"],
  ];
  return (
    <div className="flex h-[40px] shrink-0 bg-[linear-gradient(90deg,#213740_0%,#22363f_55%,#1d2f3f_80%,#1b2544_92%,#1a2340_100%)] text-white">
      <div className="flex w-[48px] items-center justify-center"><WinLogo className="size-[16px]" /></div>
      <div className="flex h-[39px] w-[343px] items-center border border-[#b9bcbd] bg-[#f2f2f2]">
        <Mag className="ml-[11px] size-[17px]" stroke="#222" />
        <Fit w={127} className="ml-[11px] pt-px text-[15px] text-[#2b2b2b]">Type here to search</Fit>
        <span className="ml-auto"><SearchArt /></span>
      </div>
      {apps.map(([ic, k], i) => (
        <div key={i} className={"flex w-[49.25px] shrink-0 flex-col items-center " + (k === "a" ? "bg-[#485f69]" : "")}>
          <div className="flex h-[38px] items-center justify-center pt-px"><span className="flex size-[24px] items-center justify-center">{ic}</span></div>
          <i className={"h-[2px] " + (k === "u" ? "w-[40px] bg-[#76b9ed]" : k === "a" ? "w-full bg-[#8ac6f4]" : "w-0")} />
        </div>
      ))}
      <div className="ml-auto flex items-center text-[15px]">
        <svg viewBox="0 0 25 24" className="w-[25px]"><path d="M16 3c9 3 10 16 1 20-5 2-11 1-14-5 8 2 15-4 13-15Z" fill="#f3a72e" /><path d="M4 9a3.500 3.500 0 0 1 0-6c2-4 7-3 8 0 4-1 4 6 0 6Z" fill="#b9cdf0" /><path d="M13 22a3 3 0 0 1 0-6c2-4 7-3 8 0 4-1 4 6 0 6Z" fill="#c9d8f5" /></svg>
        <Fit w={22} className="ml-[8px] pt-px text-[14.500px]">8°C</Fit>
        <Fit w={80} className="ml-[8px] pt-px text-[14.500px]">Partly cloudy</Fit>
        <Chev up className="ml-[20px] w-[13px]" />
        <svg viewBox="0 0 16 14" className="ml-[17px] w-[16px]" fill="none" stroke="#fff" strokeWidth="1.100"><path d="M.5 5h2.500l3.500-3.500v11L3 9H.5ZM9.500 4.500l5 5m0-5-5 5" /></svg>
        <svg viewBox="0 0 12 16" className="ml-[19px] w-[12px]" fill="none" stroke="#fff" strokeWidth="1.200"><path d="M1 5h7.500v6.500H1ZM8.500 7.500 11 6v5L8.500 9.500M2 2.500q3.500-2 7 0M2 14q3.500 2 7 0" /></svg>
        <Net className="ml-[17px] w-[17px]" />
        <Fit w={23} className="ml-[14px] text-[12px]">ENG</Fit>
        <div className="ml-[12px] flex w-[58px] flex-col items-center text-[12px] leading-[18px]"><Fit w={27}>22:12</Fit><Fit w={58}>06/01/2023</Fit></div>
        <span className="relative ml-[18px] block size-[24px]">
          <svg viewBox="0 0 16 16" className="size-[16px]"><path d="M0 0h16v12H6l-3 3.500V12H0Z" fill="#fff" /><path d="M3 3.500h10M3 6h10M3 8.500h7" stroke="#1b2442" /></svg>
          <i className="absolute right-0 bottom-0 flex size-[16px] items-center justify-center rounded-full border border-[#999] bg-[#333a45] text-[11px] not-italic">1</i>
        </span>
        <i className="mr-[4px] ml-[12px] h-[40px] w-px bg-[#77809a]" />
      </div>
    </div>
  );
}

export default function App() {
  return (
    <div className={"flex h-[1080px] w-[1920px] flex-col overflow-hidden bg-[#808080] " + UI}>
      <OuterTabs />
      <OuterToolbar />
      <Bookmarks />
      <div className="relative flex h-[937px] shrink-0 overflow-hidden">
        <div className="ml-[127px] flex w-[1666px] flex-col shadow-[0_0_12px_rgba(0,0,0,0.5)]">
          <InnerBrowser />
          <PdfToolbar />
          <div className="relative flex h-[792px] shrink-0 overflow-hidden bg-[#505454]">
            <Sidebar />
            <div className="flex w-[1391px] pt-[3px] pl-[352px]"><Report /></div>
            <div className="flex w-[15px] flex-col items-center justify-between bg-[#f1f1f1] py-[5px]">
              <svg viewBox="0 0 8 4" className="w-[7px]" fill="#999"><path d="M4 0 8 4H0Z" /></svg>
              <i className="mt-[6px] mb-auto h-[615px] w-[11px] bg-[#a8a8a8]" />
              <svg viewBox="0 0 8 4" className="w-[7px]" fill="#555"><path d="M0 0h8L4 4Z" /></svg>
            </div>
            <Watermark className="top-[79px] left-[213px]" />
            <Watermark className="top-[79px] left-[1046px]" />
            <Watermark className="top-[315px] left-[630px]" />
            <Watermark className="top-[551px] left-[213px]" />
            <Watermark className="top-[551px] left-[1046px]" />
          </div>
          <InnerTaskbar />
        </div>
        <div className="absolute top-[444px] left-[1901px] flex size-[50px] items-center rounded-full bg-[#b4b4b4] pl-[11px] shadow-[0_0_8px_rgba(0,0,0,0.35)]">
          <svg viewBox="0 0 12 14" className="w-[12px]" fill="none" stroke="#555" strokeWidth="2"><path d="M9 1 2 7l7 6M12 4 7 7l5 3" /></svg>
        </div>
      </div>
      <OuterTaskbar />
    </div>
  );
}
